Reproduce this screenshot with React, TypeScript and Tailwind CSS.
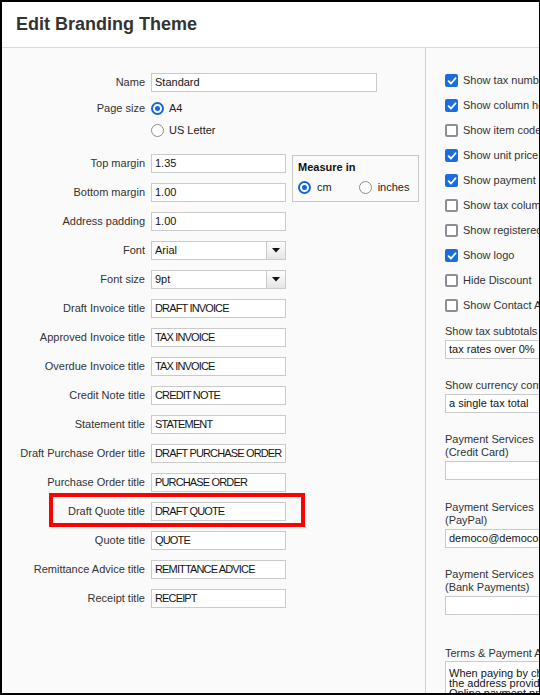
import React from "react";

const FONT = "font-['Liberation_Sans',Arial,sans-serif]";

function Radio({ on }: { on: boolean }) {
  return on ? (
    <span className="w-[13px] h-[13px] shrink-0 rounded-full border-[2px] border-[#1466d8] bg-white flex items-center justify-center">
      <span className="w-[5px] h-[5px] rounded-full bg-[#1466d8]" />
    </span>
  ) : (
    <span className="w-[13px] h-[13px] shrink-0 rounded-full border-[1.5px] border-[#8b8b8b] bg-white" />
  );
}

function Check({ on }: { on: boolean }) {
  return on ? (
    <span className="w-[13px] h-[13px] shrink-0 rounded-[2px] bg-[#1a6ddf] flex items-center justify-center">
      <svg width="10" height="10" viewBox="0 0 10 10">
        <path d="M1.6 5.1 L4 7.5 L8.5 2.3" stroke="white" strokeWidth="1.8" fill="none" strokeLinecap="round" strokeLinejoin="round" />
      </svg>
    </span>
  ) : (
    <span className="w-[13px] h-[13px] shrink-0 rounded-[2px] border-[2px] border-[#8e8e96] bg-white" />
  );
}

function Input({ value, w = "w-[135px]", upper = true }: { value: string; w?: string; upper?: boolean }) {
  return (
    <div
      className={`${w} h-[19px] border border-[#cacaca] bg-white pl-[3px] flex items-center text-[#141414] whitespace-nowrap overflow-hidden ${
        upper ? "tracking-[-0.85px]" : ""
      }`}
    >
      {value}
    </div>
  );
}

function Select({ value }: { value: string }) {
  return (
    <div className="w-[135px] h-[19px] border border-[#cacaca] bg-white flex items-stretch text-[#141414]">
      <div className="flex-1 pl-[3px] flex items-center">{value}</div>
      <div className="w-[19px] border-l border-[#cacaca] bg-gradient-to-b from-[#fdfdfd] to-[#e6e6e6] flex items-center justify-center">
        <svg width="8" height="5" viewBox="0 0 8 5">
          <path d="M0 0 H8 L4 4.5 Z" fill="#111" />
        </svg>
      </div>
    </div>
  );
}

function Row({ label, children, className = "" }: { label: string; children: React.ReactNode; className?: string }) {
  return (
    <div className={`relative flex items-center h-[19px] ${className}`}>
      <div className="w-[143px] shrink-0 text-right text-[#333] whitespace-nowrap">{label}</div>
      <div className="ml-[6px]">{children}</div>
    </div>
  );
}

const titles: [string, string][] = [
  ["Draft Invoice title", "DRAFT INVOICE"],
  ["Approved Invoice title", "TAX INVOICE"],
  ["Overdue Invoice title", "TAX INVOICE"],
  ["Credit Note title", "CREDIT NOTE"],
  ["Statement title", "STATEMENT"],
  ["Draft Purchase Order title", "DRAFT PURCHASE ORDER"],
  ["Purchase Order title", "PURCHASE ORDER"],
  ["Draft Quote title", "DRAFT QUOTE"],
  ["Quote title", "QUOTE"],
  ["Remittance Advice title", "REMITTANCE ADVICE"],
  ["Receipt title", "RECEIPT"],
];

const checks: [string, boolean][] = [
  ["Show tax numbers", true],
  ["Show column headings", true],
  ["Show item code", false],
  ["Show unit price and quantity", true],
  ["Show payment advice cut-off", true],
  ["Show tax column", false],
  ["Show registered address", false],
  ["Show logo", true],
  ["Hide Discount", false],
  ["Show Contact Account number", false],
];

export default function App() {
  return (
    <div
      className={`${FONT} text-[11px] w-[540px] h-[695px] overflow-hidden border-l-2 border-t-2 border-b-2 border-r border-black bg-[#fafafa] flex flex-col`}
    >
      <div className="h-[46px] shrink-0 bg-white border-b border-[#d9d9d9] flex items-center pl-[14px] pb-[1px]">
        <h1 className="text-[18px] font-bold text-[#333] leading-none">Edit Branding Theme</h1>
      </div>
      <div className="flex flex-1 min-h-0">
        {/* left column */}
        <div className="w-[424px] shrink-0 border-r border-[#d0d0d0] pt-[25px] flex flex-col">
          <Row label="Name">
            <Input value="Standard" w="w-[226px]" upper={false} />
          </Row>
          <Row label="Page size" className="mt-[7px]">
            <div className="flex items-center gap-[5px] text-[#222]">
              <Radio on={true} />
              <span>A4</span>
            </div>
          </Row>
          <Row label="" className="mt-[3px]">
            <div className="flex items-center gap-[5px] text-[#222]">
              <Radio on={false} />
              <span>US Letter</span>
            </div>
          </Row>
          <div className="flex mt-[14px]">
            <div className="flex flex-col gap-[10px]">
              <Row label="Top margin">
                <Input value="1.35" upper={false} />
              </Row>
              <Row label="Bottom margin">
                <Input value="1.00" upper={false} />
              </Row>
            </div>
            <div className="ml-[6px] mt-[1px] w-[127px] h-[47px] border border-[#c8c8c8] pl-[5px] pt-[5px] flex flex-col">
              <div className="font-bold text-[#111] leading-[13px]">Measure in</div>
              <div className="flex items-center mt-[5px] text-[#222]">
                <Radio on={true} />
                <span className="ml-[6px]">cm</span>
                <span className="ml-[27px] flex items-center">
                  <Radio on={false} />
                </span>
                <span className="ml-[6px]">inches</span>
              </div>
            </div>
          </div>
          <div className="flex flex-col gap-[10px] mt-[10px]">
            <Row label="Address padding">
              <Input value="1.00" upper={false} />
            </Row>
            <Row label="Font">
              <Select value="Arial" />
            </Row>
            <Row label="Font size">
              <Select value="9pt" />
            </Row>
            {titles.map(([l, v]) => (
              <Row key={l} label={l}>
                <Input value={v} />
                {l === "Draft Quote title" && (
                  <div className="absolute left-[47px] top-[-9px] w-[256px] h-[34px] border-[4px] border-[#ff0000] pointer-events-none" />
                )}
              </Row>
            ))}
          </div>
        </div>
        {/* right column */}
        <div className="flex-1 min-w-0 overflow-hidden pl-[19px] pt-[23px] text-[#333]">
          <div className="w-[260px] flex flex-col">
            <div className="flex flex-col gap-[6px]">
              {checks.map(([l, on]) => (
                <div key={l} className="flex items-center h-[19px] whitespace-nowrap">
                  <Check on={on} />
                  <span className="ml-[5px]">{l}</span>
                </div>
              ))}
            </div>
            <div className="mt-[10px] leading-[13px] whitespace-nowrap">Show tax subtotals by</div>
            <div className="mt-[2px]">
              <Input value="tax rates over 0%" w="w-[220px]" upper={false} />
            </div>
            <div className="mt-[20px] leading-[13px] whitespace-nowrap">Show currency conversion as</div>
            <div className="mt-[2px]">
              <Input value="a single tax total" w="w-[220px]" upper={false} />
            </div>
            <div className="mt-[20px] leading-[13px]">
              Payment Services
              <br />
              (Credit Card)
            </div>
            <div className="mt-[2px]">
              <Input value="" w="w-[220px]" />
            </div>
            <div className="mt-[21px] leading-[13px]">
              Payment Services
              <br />
              (PayPal)
            </div>
            <div className="mt-[2px]">
              <Input value="democo@democo.com" w="w-[220px]" upper={false} />
            </div>
            <div className="mt-[20px] leading-[13px]">
              Payment Services
              <br />
              (Bank Payments)
            </div>
            <div className="mt-[2px]">
              <Input value="" w="w-[220px]" />
            </div>
            <div className="mt-[32px] leading-[13px] whitespace-nowrap">Terms &amp; Payment Advice (invoices and statements)</div>
            <div className="mt-[1px] w-[220px] h-[60px] border border-[#cacaca] bg-white pl-[3px] pt-[6px] text-[#141414] leading-[10px] whitespace-nowrap overflow-hidden">
              <div>When paying by cheque, please complete this payment advice</div>
              <div>the address provided.</div>
              <div>Online payment processing is available</div>
            </div>
          </div>
        </div>
      </div>
    </div>
  );
}
